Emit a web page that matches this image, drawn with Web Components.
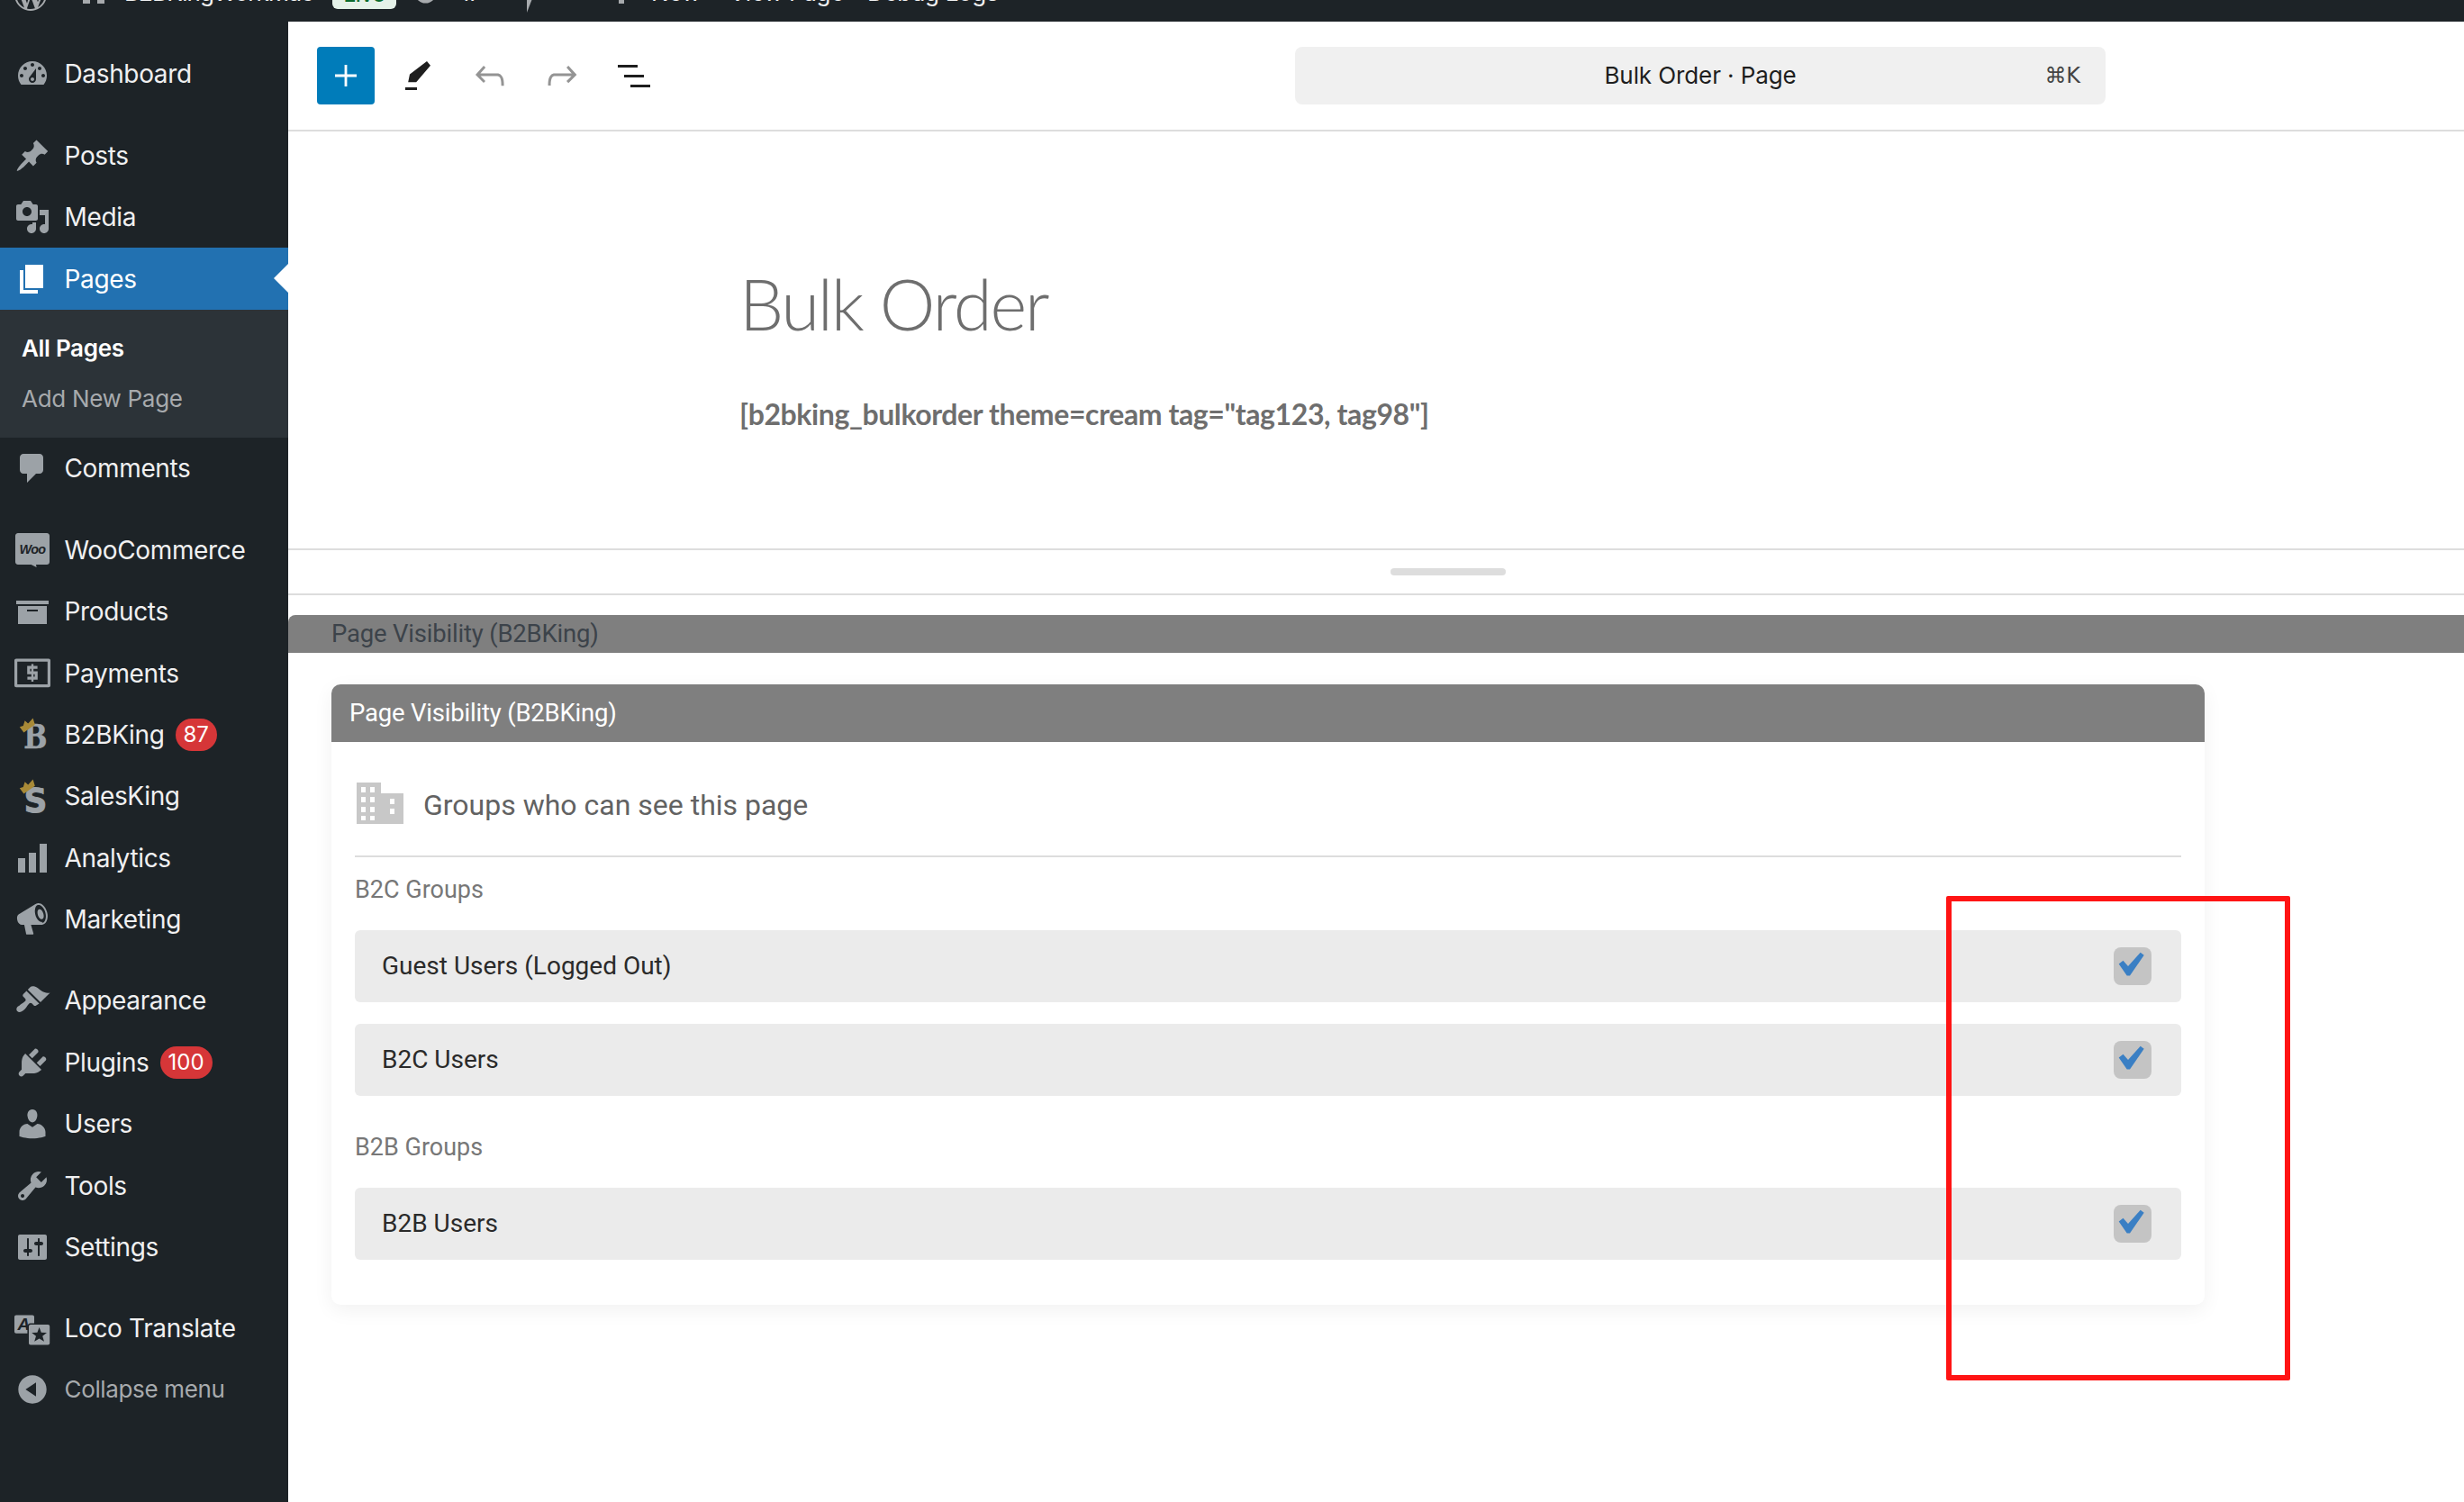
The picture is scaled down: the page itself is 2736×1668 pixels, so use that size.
<!DOCTYPE html>
<html lang="en"><head><meta charset="utf-8"><title>Bulk Order</title>
<style>
html,body{margin:0;padding:0;background:#fff;height:1668px;overflow:hidden}
body{font-family:Inter,"Liberation Sans",sans-serif}
</style></head>
<body>
<wp-app></wp-app>
<script>
const CROWN='<path d="M2.9 5.6l2-.6.9-2.9 1.8 1.6 2.7-3 1.1 3.7-6.2 4.4z" fill="#a88a37"/>';
const ICONS={
dashboard:'<path fill-rule="evenodd" d="M3.76 16h12.48c1.1-1.37 1.76-3.11 1.76-5 0-4.42-3.58-8-8-8s-8 3.58-8 8c0 1.89.66 3.63 1.76 5zM10 4c.55 0 1 .45 1 1s-.45 1-1 1-1-.45-1-1 .45-1 1-1zM6 6c.55 0 1 .45 1 1s-.45 1-1 1-1-.45-1-1 .45-1 1-1zm8 0c.55 0 1 .45 1 1s-.45 1-1 1-1-.45-1-1 .45-1 1-1zm-5.37 5.55L12 7v6c0 1.1-.9 2-2 2s-2-.9-2-2c0-.57.24-1.08.63-1.45zM4 10c.55 0 1 .45 1 1s-.45 1-1 1-1-.45-1-1 .45-1 1-1zm12 0c.55 0 1 .45 1 1s-.45 1-1 1-1-.45-1-1 .45-1 1-1zm-5 3c0-.55-.45-1-1-1s-1 .45-1 1 .45 1 1 1 1-.45 1-1z"/>',
post:'<path d="M10.44 3.02l1.82-1.82 6.36 6.35-1.83 1.82c-1.05-.68-2.48-.57-3.41.36l-.75.75c-.92.93-1.04 2.35-.35 3.41l-1.83 1.82-2.41-2.41-2.8 2.79c-.42.42-3.38 2.71-3.8 2.29s1.86-3.39 2.28-3.81l2.79-2.79L4.1 9.36l1.83-1.82c1.05.69 2.48.57 3.4-.36l.75-.75c.93-.92 1.05-2.35.36-3.41z"/>',
media:'<path fill-rule="evenodd" d="M13 11V4c0-.55-.45-1-1-1h-1.67L9 1H5L3.67 3H2c-.55 0-1 .45-1 1v7c0 .55.45 1 1 1h10c.55 0 1-.45 1-1zM7 4.5c1.38 0 2.5 1.12 2.5 2.5S8.38 9.5 7 9.5 4.5 8.38 4.5 7 5.62 4.5 7 4.5zM14 6h5v10.5c0 1.38-1.12 2.5-2.5 2.5S14 17.88 14 16.5s1.12-2.5 2.5-2.5c.17 0 .34.02.5.05V9h-3V6zm-4 8.05V13h2v3.5c0 1.38-1.12 2.5-2.5 2.5S7 17.88 7 16.5 8.12 14 9.5 14c.17 0 .34.02.5.05z"/>',
page:'<path d="M6 15V2h10v13H6zm-1 1h8v2H3V5h2v11z"/>',
comments:'<path d="M5 2h9c1.1 0 2 .9 2 2v7c0 1.1-.9 2-2 2h-2l-5 5v-5H5c-1.1 0-2-.9-2-2V4c0-1.1.9-2 2-2z"/>',
woo:'<path d="M2 .5h16c.9 0 1.500.7 1.500 1.500v14.500c0 .9-.7 1.500-1.500 1.500h-6l.3 1.500-3-1.500H2c-.9 0-1.500-.7-1.500-1.500V2c0-.8.7-1.500 1.500-1.500z"/><text x="10" y="11.800" text-anchor="middle" textLength="14.400" lengthAdjust="spacingAndGlyphs" font-family="Liberation Sans,sans-serif" font-style="italic" font-weight="700" font-size="7.500" fill="#1d2327">Woo</text>',
archive:'<path fill-rule="evenodd" d="M19 4v2H1V4h18zM2 7h16v10H2V7zm11 3V9H7v1h6z"/>',
payments:'<path fill-rule="evenodd" d="M1 1.800h18c.6 0 1 .4 1 1v13.800c0 .6-.4 1-1 1H1c-.6 0-1-.4-1-1V2.800c0-.6.4-1 1-1zm.6 1.600v12.600h16.800V3.400z"/><path fill="none" stroke-width="1.600" d="M12.800 6.600H7.900v3h4.200v3H7.200"/><path fill="none" stroke-width="1.200" d="M10 4.700v9.800"/>',
b2b:'<text transform="translate(11.600 17.300) scale(.84 1)" text-anchor="middle" font-family="DejaVu Serif,serif" font-weight="700" font-size="18.500" stroke="currentColor" stroke-width=".3">B</text>'+CROWN,
sales:'<text transform="translate(11.600 19) scale(.95 1)" text-anchor="middle" font-family="DejaVu Sans,sans-serif" font-weight="700" font-size="19" stroke="currentColor" stroke-width=".4">S</text>'+CROWN,
chart:'<path d="M18 18V2h-4v16h4zm-6 0V7H8v11h4zm-6 0v-8H2v8h4z"/>',
megaphone:'<path fill-rule="evenodd" d="M18.15 5.94c.46 1.62.38 3.22-.02 4.48-.42 1.28-1.26 2.18-2.3 2.48-.16.06-.26.06-.4.06-.06.02-.12.02-.18.02-.06.02-.14.02-.22.02H9.200l1.400 4.900c.02.14-.06.26-.14.34-.08.1-.24.16-.34.16H6.950c-.1 0-.26-.06-.34-.16-.08-.08-.16-.2-.14-.34l-1-4.900H4.250l-.02-.02c-.5.06-1.080-.18-1.540-.62s-.88-1.080-1.060-1.880c-.24-.8-.2-1.560-.02-2.200.18-.62.58-1.080 1.060-1.300l.02-.02 9-5.400c.1-.06.18-.1.24-.16.06-.04.14-.08.24-.12.16-.08.28-.12.5-.18 1.040-.3 2.240.1 3.220 1 .98.88 1.800 2.240 2.260 3.860zm-2.580 5.980c.4-.1.74-.34 1.040-.7.58-.7.86-1.760.86-3.040-.02-.64-.1-1.300-.28-1.980-.34-1.360-1.020-2.500-1.780-3.240-.38-.38-.76-.66-1.180-.84-.42-.16-.8-.2-1.140-.1-.04 0-.06.02-.1.02-.78.26-1.300 1.100-1.500 2.200-.12.62-.14 1.300-.06 2.020s.22 1.400.46 2c.14.38.26.7.48 1.040.28.5.62.96 1.040 1.320.42.36.84.62 1.260.74.14.04.3.06.42.06zm-.4-2c-.66 0-1.600-.7-2.100-2.200-.5-1.500-.3-3 .6-3.300s1.900.8 2.400 2.300.2 3.200-.9 3.200z"/>',
appearance:'<path d="M14.48 11.06L7.41 3.99l1.5-1.5c.5-.56 2.3-.47 3.51.32 1.21.8 1.43 1.28 2.91 2.1 1.18.64 2.45 1.26 4.45.85zm-.71.71L6.7 4.7 4.93 6.47c-.39.39-.39 1.02 0 1.41l1.06 1.06c.39.39.39 1.03 0 1.42-.6.6-1.43 1.11-2.21 1.69-.35.26-.7.53-1.01.84C1.43 13.23.63 15 1.63 16s2.77.2 4.11-1.14c.31-.31.58-.66.84-1.01.58-.78 1.09-1.61 1.69-2.21.39-.39 1.02-.39 1.41 0l1.06 1.06c.39.39 1.02.39 1.41 0z"/>',
plugins:'<path d="M13.11 4.36L9.87 7.6 8 5.73l3.24-3.24c.35-.34 1.05-.2 1.56.32.52.51.66 1.21.31 1.55zm-8 1.77l.91-1.12 9.01 9.01-1.19.84c-.71.71-2.63 1.16-3.82 1.16H6.14L4.9 17.26c-.59.59-1.54.59-2.12 0-.59-.58-.59-1.53 0-2.12l1.24-1.24v-3.88c0-1.13.4-3.19 1.09-3.89zm7.26 3.97l3.24-3.24c.34-.35 1.04-.21 1.55.31.52.51.66 1.21.31 1.55l-3.24 3.25z"/>',
users:'<path d="M10 9.25c-2.27 0-2.73-3.44-2.73-3.44C7 4.02 7.82 2 9.97 2c2.16 0 2.98 2.02 2.71 3.81 0 0-.41 3.44-2.68 3.44zm0 2.57L12.72 10c2.39 0 4.52 2.33 4.52 4.53v2.49s-3.65 1.13-7.24 1.13c-3.65 0-7.24-1.13-7.24-1.13v-2.49c0-2.25 1.94-4.48 4.47-4.48z"/>',
tools:'<path fill-rule="evenodd" d="M16.68 9.77c-1.34 1.34-3.3 1.67-4.95.99l-5.41 6.52c-.99.99-2.59.99-3.58 0s-.99-2.59 0-3.57l6.52-5.42c-.68-1.65-.35-3.61.99-4.95 1.28-1.28 3.12-1.62 4.72-1.06l-2.89 2.89 2.82 2.82 2.86-2.87c.53 1.58.18 3.39-1.08 4.65zM3.81 16.21c.4.39 1.04.39 1.43 0 .4-.4.4-1.04 0-1.43-.39-.4-1.03-.4-1.43 0-.39.39-.39 1.03 0 1.43z"/>',
settings:'<path fill-rule="evenodd" d="M18 16V4c0-.55-.45-1-1-1H3c-.55 0-1 .45-1 1v12c0 .55.45 1 1 1h14c.55 0 1-.45 1-1zM8 11h1c.55 0 1 .45 1 1s-.45 1-1 1H8v1.5c0 .28-.22.5-.5.5s-.5-.22-.5-.5V13H6c-.55 0-1-.45-1-1s.45-1 1-1h1V5.5c0-.28.22-.5.5-.5s.5.22.5.5V11zm5-2h-1c-.55 0-1-.45-1-1s.45-1 1-1h1V5.5c0-.28.22-.5.5-.5s.5.22.5.5V7h1c.55 0 1 .45 1 1s-.45 1-1 1h-1v5.5c0 .28-.22.5-.5.5s-.5-.22-.5-.5V9z"/>',
loco:'<path d="M1 2.800h9c.6 0 1 .4 1 1v3.400H8.900c-.9 0-1.700.8-1.700 1.700v4H1c-.6 0-1-.4-1-1V3.800c0-.6.4-1 1-1z"/><text x="5" y="11" text-anchor="middle" font-family="Liberation Sans,sans-serif" font-style="italic" font-weight="700" font-size="9.500" fill="#1d2327">A</text><path fill-rule="evenodd" d="M9 8h9.600c.6 0 1 .4 1 1v9.200c0 .6-.4 1-1 1H9c-.6 0-1-.4-1-1V9c0-.6.4-1 1-1zm4.800 1.500l-1.100 2.900-3.100.1 2.400 1.900-.9 3 2.700-1.700 2.700 1.700-.9-3 2.400-1.900-3.100-.1z"/>',
collapse:'<path fill-rule="evenodd" d="M10 2.160c4.330 0 7.840 3.510 7.840 7.840s-3.510 7.840-7.840 7.840S2.160 14.330 2.160 10 5.710 2.160 10 2.160zm2 11.720V6.120L6.180 9.970z"/>',
wp:'<path fill-rule="evenodd" d="M20 10c0-5.510-4.490-10-10-10C4.480 0 0 4.490 0 10c0 5.520 4.480 10 10 10 5.510 0 10-4.480 10-10zM7.780 15.370L4.370 6.220c.55-.02 1.170-.08 1.170-.08.5-.06.44-1.130-.06-1.110 0 0-1.450.11-2.370.11-.18 0-.37 0-.58-.01C4.120 2.690 6.870 1.110 10 1.110c2.330 0 4.450.87 6.050 2.340-.68-.11-1.650.39-1.650 1.580 0 .74.45 1.360.9 2.100.35.61.55 1.360.55 2.460 0 1.490-1.400 5-1.400 5l-3.030-8.370c.54-.02.82-.17.82-.17.5-.05.44-1.250-.06-1.220 0 0-1.440.12-2.380.12-.87 0-2.330-.12-2.330-.12-.5-.03-.56 1.200-.06 1.220l.92.08 1.260 3.410zM17.410 10c.24-.64.74-1.870.43-4.250.7 1.290 1.050 2.710 1.050 4.250 0 3.290-1.730 6.240-4.400 7.780.97-2.590 1.940-5.200 2.920-7.780zM6.100 18.090C3.120 16.650 1.110 13.530 1.110 10c0-1.300.23-2.480.72-3.590C3.250 10.300 4.670 14.200 6.100 18.090zm4.030-6.630l2.580 6.980c-.86.29-1.760.45-2.710.45-.79 0-1.570-.11-2.290-.33.81-2.380 1.620-4.740 2.420-7.100z"/>'
};
function def(name,html,init){
  customElements.define(name,class extends HTMLElement{
    connectedCallback(){
      if(this.shadowRoot)return;
      const r=this.attachShadow({mode:'open'});
      r.innerHTML=typeof html==='function'?html(this):html;
      if(init)init(this,r);
    }
  });
}
def('wp-icon',h=>`<style>:host{display:inline-flex;width:var(--s,40px);height:var(--s,40px);flex:none;color:inherit}svg{width:100%;height:100%;fill:currentColor;stroke:none;overflow:visible}svg path[stroke-width]{stroke:currentColor}</style><svg viewBox="0 0 20 20">${ICONS[h.getAttribute('name')]||''}</svg>`);

def('wp-topbar',`<style>
:host{display:block;height:24px;background:#1d2327;overflow:hidden;color:#f0f0f1;font:400 26px/64px Inter,"Liberation Sans",sans-serif;grid-column:1/3;letter-spacing:-.3px}
.scrolled{display:flex;align-items:center;height:64px;margin-top:-40px;white-space:nowrap}
svg{flex:none;fill:#a7aaad}
span{flex:none}
.live{margin-left:18px;width:71px;height:36px;box-sizing:border-box;background:#e5f2e9;color:#0a6b2c;border-radius:6px;font-size:24px;line-height:40px;text-align:center;font-weight:500}
</style><div class="scrolled">
<svg style="margin-left:16px;margin-top:4px" width="36" height="36" viewBox="0 0 20 20">${ICONS.wp}</svg>
<svg style="margin-left:40px;margin-top:-8px" width="24" height="32" viewBox="0 0 24 32"><path fill-rule="evenodd" d="M0 0h24v32H0zM8 18v14h8V18z"/></svg>
<span style="margin-left:22px;width:213px;letter-spacing:-.9px">B2BKingWorkMac</span>
<span class="live">Live</span>
<svg style="margin-left:21px" width="23" height="26" viewBox="0 0 23 26"><circle cx="11.5" cy="13" r="11.5"/></svg>
<span style="margin-left:27px;width:29px;font-size:25px">17</span>
<svg style="margin-left:45px;margin-top:8px" width="14" height="36" viewBox="0 0 14 36"><path d="M0 0h14L0 36z"/></svg>
<svg style="margin-left:27px;margin-top:-6px" width="9" height="22" viewBox="0 0 9 22"><circle cx="4.5" cy="15" r="4.5"/></svg>
<svg style="margin-left:52px;margin-top:-4px" width="6" height="28" viewBox="0 0 6 28"><path d="M0 0h6v28H0z"/></svg>
<span style="margin-left:30px;width:48px">New</span>
<span style="margin-left:39px;width:118px">View Page</span>
<span style="margin-left:35px">Debug Logs</span>
</div>`);

def('wp-menu-item',h=>{
 const a=n=>h.getAttribute(n),b=a('badge');
 return `<style>
:host{display:flex;align-items:center;height:var(--h,68.4px);position:relative;box-sizing:border-box;padding-left:16px;color:#f0f0f1;font:400 28px/1 Inter,"Liberation Sans",sans-serif;letter-spacing:-.35px}
:host([active]){background:#2271b1;color:#fff;--ic:#fff;--h:69px}
:host([dim]){color:#a7aaad;font-size:26px;--h:66px}
wp-icon{color:var(--ic,#9ca2a7);margin-right:15.5px}
.badge{margin-left:12px;background:#d63638;color:#fff;height:36px;min-width:46px;padding:0 9px;box-sizing:border-box;border-radius:18px;font-size:24px;line-height:36px;text-align:center;letter-spacing:0}
:host([active])::after{content:"";position:absolute;right:0;top:18px;border:16px solid transparent;border-right-color:#fff;border-left:0}
</style><wp-icon name="${a('icon')}"></wp-icon><span>${a('label')}</span>${b?`<span class="badge">${b}</span>`:''}`;
});

def('wp-submenu',`<style>
:host{display:flex;flex-direction:column;box-sizing:border-box;height:142px;padding:15px 0 0 24px;background:#2c3338;font:400 26px/56px Inter,"Liberation Sans",sans-serif;color:#a7aaad;letter-spacing:-.3px}
.on{color:#fff;font-weight:600}
</style><span class="on">All Pages</span><span>Add New Page</span>`);

def('wp-sidebar',`<style>
:host{display:flex;flex-direction:column;background:#1d2327;width:320px;padding-top:24px;box-sizing:border-box;min-height:0}
.g{display:flex;flex-direction:column;margin-bottom:22px}
.g.t{margin-bottom:0}
</style>
<div class="g"><wp-menu-item icon="dashboard" label="Dashboard"></wp-menu-item></div>
<div class="g">
<wp-menu-item icon="post" label="Posts"></wp-menu-item>
<wp-menu-item icon="media" label="Media"></wp-menu-item>
<wp-menu-item icon="page" label="Pages" active></wp-menu-item>
<wp-submenu></wp-submenu>
<wp-menu-item icon="comments" label="Comments"></wp-menu-item>
</div>
<div class="g">
<wp-menu-item icon="woo" label="WooCommerce"></wp-menu-item>
<wp-menu-item icon="archive" label="Products"></wp-menu-item>
<wp-menu-item icon="payments" label="Payments"></wp-menu-item>
<wp-menu-item icon="b2b" label="B2BKing" badge="87"></wp-menu-item>
<wp-menu-item icon="sales" label="SalesKing"></wp-menu-item>
<wp-menu-item icon="chart" label="Analytics"></wp-menu-item>
<wp-menu-item icon="megaphone" label="Marketing"></wp-menu-item>
</div>
<div class="g">
<wp-menu-item icon="appearance" label="Appearance"></wp-menu-item>
<wp-menu-item icon="plugins" label="Plugins" badge="100"></wp-menu-item>
<wp-menu-item icon="users" label="Users"></wp-menu-item>
<wp-menu-item icon="tools" label="Tools"></wp-menu-item>
<wp-menu-item icon="settings" label="Settings"></wp-menu-item>
</div>
<div class="g t">
<wp-menu-item icon="loco" label="Loco Translate"></wp-menu-item>
<wp-menu-item icon="collapse" label="Collapse menu" dim></wp-menu-item>
</div>`);

def('wp-toolbar',`<style>
:host{display:flex;align-items:center;height:122px;box-sizing:border-box;border-bottom:2px solid #ddd;padding-left:32px;background:#fff;flex:none}
.add{width:64px;height:64px;border-radius:4px;background:#007cba;display:flex;align-items:center;justify-content:center;margin-right:24px}
.tool{width:48px;height:48px;margin-right:32px;flex:none}
.search{margin-left:710px;width:900px;height:64px;background:#f0f0f0;border-radius:8px;display:grid;grid-template-columns:1fr auto 1fr;align-items:center;font:400 26px/1 Inter,"Liberation Sans",sans-serif;color:#1e1e1e;letter-spacing:-.1px;flex:none}
.k{justify-self:end;padding-right:28px;color:#444;font-size:24px;font-family:"DejaVu Sans",sans-serif}
</style>
<div class="add"><svg width="48" height="48" viewBox="0 0 24 24" fill="#fff"><path d="M11.3 6h1.4v5.3H18v1.4h-5.3V18h-1.400v-5.300H6v-1.400h5.300z"/></svg></div>
<svg class="tool" viewBox="0 0 24 24" fill="#1e1e1e"><path d="M5 18.500h6.500V20H5zM17 4l2 2.400-7.900 9.200H6.600l.9-4.300z"/></svg>
<svg class="tool" viewBox="0 0 24 24" fill="#949494"><path d="M18.3 11.7c-.6-.6-1.4-.9-2.3-.9H6.7l2.9-3.3-1.1-1-4.5 5L8.5 16l1-1-2.7-2.7H16c.5 0 .9.2 1.3.5 1 1 1 3.4 1 4.5v.3h1.5v-.2c0-1.5 0-4.3-1.5-5.7z"/></svg>
<svg class="tool" viewBox="0 0 24 24" fill="#949494"><path d="M15.6 6.5l-1.1 1 2.9 3.3H8c-.9 0-1.7.3-2.3.9-1.4 1.5-1.4 4.2-1.4 5.6v.2h1.5v-.3c0-1.1 0-3.5 1-4.5.3-.3.7-.5 1.3-.5h9.2L14.5 15l1.1 1.1 4.6-4.6-4.6-5z"/></svg>
<svg class="tool" viewBox="0 0 24 24" fill="#1e1e1e" style="margin-right:0"><path d="M3 6h11v1.500H3V6zm3.500 5.500h11V13h-11v-1.500zM21 17H10v1.500h11V17z"/></svg>
<div class="search"><span></span><span>Bulk Order · Page</span><span class="k">⌘K</span></div>`);

def('wp-post',`<style>
:host{display:flex;flex-direction:column;height:463px;box-sizing:border-box;padding:141px 0 0 501px;color:#6e6e6e;flex:none}
h1{margin:0 0 48.5px;font:300 78px/100px Lato,"Noto Sans",sans-serif;letter-spacing:-2.2px;white-space:nowrap}
p{margin:0;font:700 32px/48px Lato,"Noto Sans",sans-serif;letter-spacing:-.4px;white-space:nowrap}
</style><h1><slot name="title"></slot></h1><p><slot name="body"></slot></p>`);

def('wp-resizer',`<style>
:host{display:flex;align-items:center;justify-content:center;height:52px;box-sizing:border-box;border-top:2px solid #ddd;border-bottom:2px solid #ddd;flex:none;padding-left:160px}
i{display:block;width:128px;height:8px;border-radius:4px;background:#ddd}
</style><i></i>`);

def('wp-metabox-head',`<style>
:host{display:block;height:42px;margin-top:22px;background:#7f7f7f;border-top-left-radius:8px;padding-left:48px;color:#3c434a;font:400 27.5px/41px Roboto,sans-serif;letter-spacing:-.2px;flex:none}
</style><slot></slot>`);

def('wp-group-card',`<style>
:host{display:block;margin:35px 0 0 48px;width:2080px;height:689px;background:#fff;border-radius:10px;box-shadow:0 6px 22px rgba(0,0,0,.06);font-family:Roboto,sans-serif;flex:none}
header{height:64px;background:#7f7f7f;border-radius:10px 10px 0 0;padding-left:20px;color:#fff;font:400 27.5px/64px Roboto,sans-serif;letter-spacing:-.2px}
.body{padding:0 26px}
.title{display:flex;align-items:center;height:128px;box-sizing:border-box;border-bottom:2px solid #ddd;padding:14px 0 0 2px;color:#626262;font-size:32px}
.title svg{margin-right:22px;margin-top:-4px;flex:none}
</style>
<header><slot name="head"></slot></header>
<div class="body">
<div class="title"><svg width="52" height="46" viewBox="0 0 52 46"><path fill="#c8c8c8" fill-rule="evenodd" d="M0 0h27v12h25v34H0zM5 5v6h5V5zm10 0v6h5V5zM5 16v6h5v-6zm10 0v6h5v-6zM5 27v6h5v-6zm10 0v6h5v-6zM5 37v5h5v-5zm10 0v5h5v-5zm22-19v6h5v-6zm0 11v6h5v-6z"/></svg><slot name="title"></slot></div>
<slot></slot>
</div>`);

def('wp-group-label',`<style>
:host{display:block;height:40px;margin:16px 0 25px;color:#777;font:400 27px/40px Roboto,sans-serif}
</style><slot></slot>`);

def('wp-check-row',`<style>
:host{display:flex;align-items:center;justify-content:space-between;height:80px;margin-bottom:24px;box-sizing:border-box;padding:0 33px 0 30px;background:#ebebeb;border-radius:6px;color:#2a2a2a;font:400 28px/1 Roboto,sans-serif}
.box{width:42px;height:42px;border-radius:8px;background:#c4c4c4;display:flex}
</style><slot></slot><span class="box"><svg width="42" height="42" viewBox="0 0 42 42"><path d="M5.700 18.400L10.500 14.800L16 21L29.700 5.700L33.700 8.800L18 31.400H14.700Z" fill="#3a7fc4"/></svg></span>`);

def('wp-annotation',`<style>
:host{position:absolute;left:2161px;top:995px;width:382px;height:538px;box-sizing:border-box;border:6px solid #ff1414;border-radius:2px;pointer-events:none}
</style>`);

def('wp-editor',`<style>
:host{display:flex;flex-direction:column;background:#fff;min-width:0;overflow:hidden}
</style>
<wp-toolbar></wp-toolbar>
<wp-post><span slot="title">Bulk Order</span><span slot="body">[b2bking_bulkorder theme=cream tag="tag123, tag98"]</span></wp-post>
<wp-resizer></wp-resizer>
<wp-metabox-head>Page Visibility (B2BKing)</wp-metabox-head>
<wp-group-card>
<span slot="head">Page Visibility (B2BKing)</span>
<span slot="title">Groups who can see this page</span>
<wp-group-label>B2C Groups</wp-group-label>
<wp-check-row>Guest Users (Logged Out)</wp-check-row>
<wp-check-row>B2C Users</wp-check-row>
<wp-group-label style="margin-top:37px">B2B Groups</wp-group-label>
<wp-check-row>B2B Users</wp-check-row>
</wp-group-card>`);

def('wp-app',`<style>
:host{display:grid;grid-template-columns:320px 1fr;grid-template-rows:24px 1fr;width:2736px;height:1668px;overflow:hidden;position:relative}
</style><wp-topbar></wp-topbar><wp-sidebar></wp-sidebar><wp-editor></wp-editor><wp-annotation></wp-annotation>`);
</script>
</body></html>
